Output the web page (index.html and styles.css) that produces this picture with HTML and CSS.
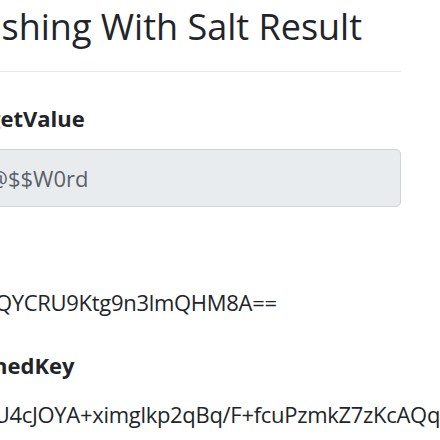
FILE: index.html
```html
<!DOCTYPE html>
<html lang="en">

<head>
    <meta charset="UTF-8">
    <meta name="viewport" content="width=device-width, initial-scale=1.0">
    <title>Hashing With Salt Result</title>
    <link rel="stylesheet" href="styles.css">
</head>

<body>
    <div class="container">
        <h2 class="title">Hashing With Salt Result</h2>
        <hr class="divider">

        <div class="form-group">
            <label class="field-label">TargetValue</label>
            <input class="form-control" type="text" value="P@$$W0rd" readonly>
        </div>

        <div class="form-group">
            <label class="field-label">Salt</label>
            <div class="field-value">Zkf2QYCRU9Ktg9n3lmQHM8A==</div>
        </div>

        <div class="form-group">
            <label class="field-label">HashedKey</label>
            <div class="field-value">q1rtU4cJOYA+ximglkp2qBq/F+fcuPzmkZ7zKcAQqW8s=</div>
        </div>
    </div>
</body>

</html>
```

FILE: styles.css
```css
html,
body {
    margin: 0;
    overflow: hidden;
}

body {
    font-family: "Open Sans", "Noto Sans", sans-serif;
    font-size: 22px;
    line-height: 1.5;
    color: #212529;
    background: #fff;
}

.container {
    width: 449px;
    margin-left: -48px;
}

.title {
    font-size: 36px;
    font-weight: 400;
    line-height: 1.2;
    margin: 5px 0 23px 3px;
}

.divider {
    border: 0;
    border-top: 1px solid #e5e7e9;
    margin: 0 0 30px;
}

.form-group {
    margin-bottom: 30px;
}

.field-label {
    display: block;
    font-weight: 700;
    margin-bottom: 14px;
}

.form-control {
    display: block;
    box-sizing: border-box;
    width: 100%;
    height: 58px;
    padding: 11px 22px;
    font: inherit;
    color: #5b6168;
    background: #e9ecef;
    border: 1px solid #ced4da;
    border-radius: 5px;
}

.field-value {
    white-space: nowrap;
    letter-spacing: -0.3px;
    padding-top: 2px;
}
```
